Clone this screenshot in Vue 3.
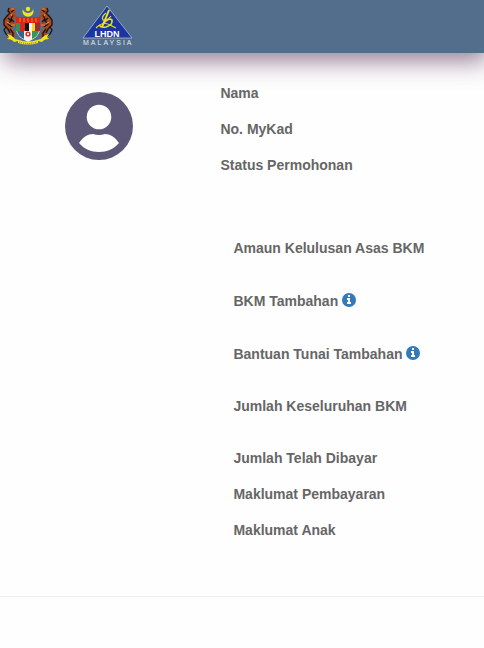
<template>
  <div class="page">
    <header class="topbar">
      <svg class="crest" viewBox="0 0 52 40" role="img" aria-label="Jata Negara">
        <!-- crescent and star -->
        <path d="M21 4a5.500 5.500 0 1 0 10 0a5 4 0 1 1-10 0z" fill="#f3e51c" />
        <circle cx="26" cy="4" r="2.200" fill="#f3e51c" />
        <g v-for="side in sides" :key="side" :transform="side">
          <path d="M7 3l3-1 3 2 1 3-1 2 2 2 1 2-4 1 0 4 4 2-1 2-4-1-1 3 3 3 0 5-3 2H6l-2-1 3-2 0-3-3-4-2-2-1-4 2-4 4-4-1-3z" fill="#ab4a22" />
          <path d="M7 3l-1 3 2 2-3 3-3 4 0 5 4 4 2 4M11 10l-2 4 3 3M6 13l3 3-3 3 4 3M12 5l-3 2M8 24l3 4 0 4" fill="none" stroke="#1d1712" stroke-width="1.400" />
          <path d="M9 4l3 0M9 9l1 2M5 17l3 2M9 20l4 0" fill="none" stroke="#f0863a" stroke-width="1.200" />
          <path d="M4 22l-2 3 2 4 3 2" fill="none" stroke="#1d1712" stroke-width="1.300" />
        </g>
        <path d="M14 13h24v12q-1 7-12 12q-11-5-12-12z" fill="#f4f1ea" />
        <path d="M14 12h24v6H14z" fill="#d9251d" />
        <path d="M18 13v4M22 13v4M26 13v4M30 13v4M34 13v4" stroke="#f3b51c" stroke-width="0.700" />
        <path d="M14 18h4v8h-4z" fill="#3a8f55" />
        <path d="M18 18h5v8h-5z" fill="#d9251d" />
        <path d="M23 18h4v8h-4z" fill="#15130f" />
        <path d="M30 18h3v8h-3z" fill="#f3d51c" />
        <path d="M33 18h5v8h-5z" fill="#9a2c35" />
        <path d="M15 26h7v8q-6-3-7-8z" fill="#35658e" />
        <path d="M30 26h7q-1 5-7 8z" fill="#37965b" />
        <circle cx="26" cy="29" r="2.600" fill="#d9251d" />
        <circle cx="26" cy="29" r="1.200" fill="#fff" />
        <!-- ribbon -->
        <path d="M5 29q5 1 8 5l4 1q9 3 18 0l4-1q3-4 8-5l-2 3 2 2q-5 0-7 3l-4-1v2q-10 3-20 0v-2l-4 1q-2-3-7-3l2-2z" fill="#f3e51c" />
        <path d="M17 37q9 3 18 0" fill="none" stroke="#7c711c" stroke-width="1" stroke-dasharray="1 1" />
      </svg>
      <svg class="lhdn" viewBox="0 0 54 42" role="img" aria-label="LHDN Malaysia">
        <path d="M26 1L51 33H2z" fill="#1c35a0" stroke="#a9b9d8" stroke-width="0.800" />
        <path d="M28 5Q25 13 21 22" fill="none" stroke="#eadf24" stroke-width="2" />
        <path d="M25 8Q20 12 22 15Q26 16 30 11" fill="none" stroke="#eadf24" stroke-width="1.200" />
        <path d="M22 19Q28 12 31 15Q32 20 25 22Q20 23 18 20" fill="none" stroke="#eadf24" stroke-width="1.600" />
        <path d="M15 23Q22 16 29 20L35 23" fill="none" stroke="#eadf24" stroke-width="1.100" />
        <text x="26" y="32" text-anchor="middle" class="lhdn-name">LHDN</text>
        <text x="2" y="40" class="lhdn-country">MALAYSIA</text>
      </svg>
    </header>

    <main class="profile">
      <div class="avatar-col">
        <svg class="avatar" viewBox="0 0 68 68" role="img" aria-label="Pengguna">
          <circle cx="34" cy="34" r="34" fill="#5d5878" />
          <circle cx="34" cy="25" r="12.300" fill="#fff" />
          <path d="M14 51C18 45 23 42 28 42Q34 44 40 42C45 42 50 45 54 51C49 57 42 60 34 60S19 57 14 51z" fill="#fff" />
        </svg>
      </div>
      <div class="details">
        <div class="identity">
          <div v-for="label in identity" :key="label" class="row">{{ label }}</div>
        </div>
        <div class="amounts">
          <div v-for="item in amounts" :key="item.label" class="row" :class="{ 'has-info': item.info }">
            {{ item.label }}
            <button v-if="item.info" type="button" class="info" :aria-label="'Maklumat ' + item.label">
              <svg viewBox="0 0 14 14">
                <circle cx="7" cy="7" r="7" fill="#337ab7" />
                <path d="M6 2h2v2H6zM5 5h3v4h1v2H5V9h1V7H5z" fill="#fff" />
              </svg>
            </button>
          </div>
        </div>
        <div class="records">
          <div v-for="label in records" :key="label" class="row">{{ label }}</div>
        </div>
      </div>
    </main>
    <hr class="divider" />
  </div>
</template>

<script setup>
// the right-hand tiger is the left one mirrored
const sides = ['translate(0 0)', 'translate(52 0) scale(-1 1)']

const identity = ['Nama', 'No. MyKad', 'Status Permohonan']

const amounts = [
  { label: 'Amaun Kelulusan Asas BKM' },
  { label: 'BKM Tambahan', info: true },
  { label: 'Bantuan Tunai Tambahan', info: true },
  { label: 'Jumlah Keseluruhan BKM' }
]

const records = ['Jumlah Telah Dibayar', 'Maklumat Pembayaran', 'Maklumat Anak']
</script>

<style>
body {
  margin: 0;
  background: #fefefe;
}
</style>

<style scoped>
.page {
  font-family: "Liberation Sans", Arial, sans-serif;
  font-size: 14px;
  line-height: 20px;
  color: #666;
  overflow: hidden;
}

.topbar {
  display: flex;
  align-items: flex-start;
  gap: 27px;
  box-sizing: border-box;
  height: 53px;
  padding: 5px 2px;
  background: #526e8c;
  box-shadow: 4px 8px 24px rgba(92, 52, 92, 0.64);
}

.crest {
  width: 52px;
  height: 40px;
}

.lhdn {
  width: 54px;
  height: 42px;
}

.lhdn-name {
  font-size: 9px;
  font-weight: bold;
  fill: #fff;
}

.lhdn-country {
  font-size: 7px;
  letter-spacing: 2px;
  fill: #e3e8ee;
}

.profile {
  display: grid;
  grid-template-columns: 41% 1fr;
  padding: 30px 0 56px;
}

.avatar-col {
  padding-top: 9px;
  text-align: center;
}

.avatar {
  width: 68px;
  height: 68px;
}

.details {
  padding-left: 22px;
  font-weight: bold;
}

.identity,
.amounts,
.records {
  display: grid;
  gap: 16px;
}

.amounts {
  gap: 32px;
  margin-top: 63px;
  padding-left: 13px;
}

.has-info {
  padding-top: 1px;
}

.records {
  margin-top: 32px;
  padding-left: 13px;
}

.info {
  width: 14px;
  height: 14px;
  padding: 0;
  border: 0;
  background: none;
  vertical-align: -1px;
  cursor: pointer;
}

.info svg {
  display: block;
}

.divider {
  height: 1px;
  margin: 0;
  border: 0;
  background: #eee;
}
</style>
